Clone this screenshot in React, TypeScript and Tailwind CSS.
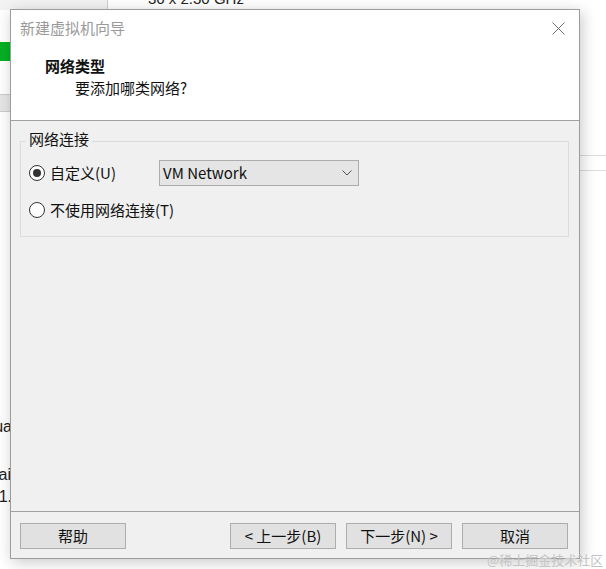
import React from "react";

const font = { fontFamily: '"Noto Sans CJK SC", "Noto Sans", sans-serif' };
const latin = { fontFamily: '"Liberation Sans", Arial, sans-serif' };

function Radio({ checked }: { checked?: boolean }) {
  return (
    <span className="flex h-[16px] w-[16px] items-center justify-center rounded-full border border-[#333333] bg-white">
      {checked && <span className="h-[8px] w-[8px] rounded-full bg-[#333333]" />}
    </span>
  );
}

function Btn({ children }: { children: React.ReactNode }) {
  return (
    <div className="flex h-[26px] w-[106px] items-center justify-center border border-[#adadad] bg-[#e1e1e1] pb-[2px] text-[15px] leading-none text-[#111]">
      {children}
    </div>
  );
}

export default function App() {
  return (
    <div
      className="relative h-[569px] w-[606px] overflow-hidden bg-white text-[#111]"
      style={font}
    >
      {/* background window fragments */}
      <div className="absolute left-0 top-0 h-[10px] w-[108px] border-r border-[#cfcfcf] bg-[#f3f3f3]" />
      <div className="absolute left-[148px] top-[-11px] text-[15px] leading-[20px] text-[#222]" style={latin}>
        36 x 2.30 GHz
      </div>
      <div className="absolute left-0 top-[42px] h-[19px] w-[12px] bg-[#06b025]" />
      <div className="absolute left-0 top-[94px] h-[18px] w-[12px] border-y border-[#cccccc] bg-[#e6e6e6]" />
      <div className="absolute left-[580px] top-[155px] h-px w-[26px] bg-[#dddddd]" />
      <div className="absolute left-[580px] top-[170px] h-px w-[26px] bg-[#dddddd]" />
      <div className="absolute right-[594px] top-[417px] text-[16px] leading-[20px] text-[#222]" style={latin}>Virtua</div>
      <div className="absolute right-[595px] top-[465px] text-[16px] leading-[20px] text-[#222]" style={latin}>Domai</div>
      <div className="absolute right-[594px] top-[487px] text-[16px] leading-[20px] text-[#222]" style={latin}>1.</div>

      {/* dialog */}
      <div className="absolute left-[10px] top-[9px] flex h-[550px] w-[570px] flex-col border border-[#9c9c9c] bg-[#f0f0f0] shadow-[2px_3px_14px_rgba(0,0,0,0.22)]">
        <div className="flex flex-col border-b border-[#a0a0a0] bg-white">
          <div className="flex h-[35px] items-center justify-between pl-[9px] pr-[14px]">
            <span className="text-[15px] leading-[20px] text-[#9a9a9a]">新建虚拟机向导</span>
            <svg width="13" height="13" viewBox="0 0 13 13" className="mt-[2px] text-[#6f6f6f]">
              <path d="M0.5 0.5 L12.5 12.5 M12.5 0.5 L0.5 12.5" stroke="currentColor" strokeWidth="1" fill="none" />
            </svg>
          </div>
          <div className="pl-[34px] pt-[10px] text-[15px] font-bold leading-[22px]">网络类型</div>
          <div className="pb-[21px] pl-[64px] text-[15px] leading-[22px]">要添加哪类网络?</div>
        </div>

        <div className="flex-1 px-[9px] pt-[20px]">
          <div className="relative h-[96px] w-[549px] border border-[#dcdcdc] pl-[8px] pt-[18px]">
            <span className="absolute left-[5px] top-[-13px] bg-[#f0f0f0] px-[3px] text-[15px] leading-[20px]">网络连接</span>
            <div className="flex h-[26px] items-center">
              <div className="flex w-[130px] items-center gap-[5px]">
                <Radio checked />
                <span className="text-[15px] leading-[20px]">自定义(U)</span>
              </div>
              <div className="flex h-[26px] w-[200px] items-center justify-between border border-[#acacac] bg-[#e5e5e5] pl-[3px] pr-[6px]">
                <span className="-mt-[1px] text-[15px] leading-[20px]">VM Network</span>
                <svg width="10" height="6" viewBox="0 0 10 6">
                  <path d="M0.5 0.5 L5 5 L9.5 0.5" stroke="#555" strokeWidth="1" fill="none" />
                </svg>
              </div>
            </div>
            <div className="mt-[13px] flex h-[22px] items-center gap-[5px]">
              <Radio />
              <span className="text-[15px] leading-[20px]">不使用网络连接(T)</span>
            </div>
          </div>
        </div>

        <div className="flex items-center border-t border-[#a0a0a0] pb-[9px] pl-[9px] pt-[11px]">
          <Btn>帮助</Btn>
          <div className="ml-[104px] flex gap-[10px]">
            <Btn>&lt; 上一步(B)</Btn>
            <Btn>下一步(N) &gt;</Btn>
            <Btn>取消</Btn>
          </div>
        </div>
      </div>

      <div className="absolute left-[487px] top-[551px] text-[13px] leading-[18px] text-[#c4c4c4]">@稀土掘金技术社区</div>
    </div>
  );
}
